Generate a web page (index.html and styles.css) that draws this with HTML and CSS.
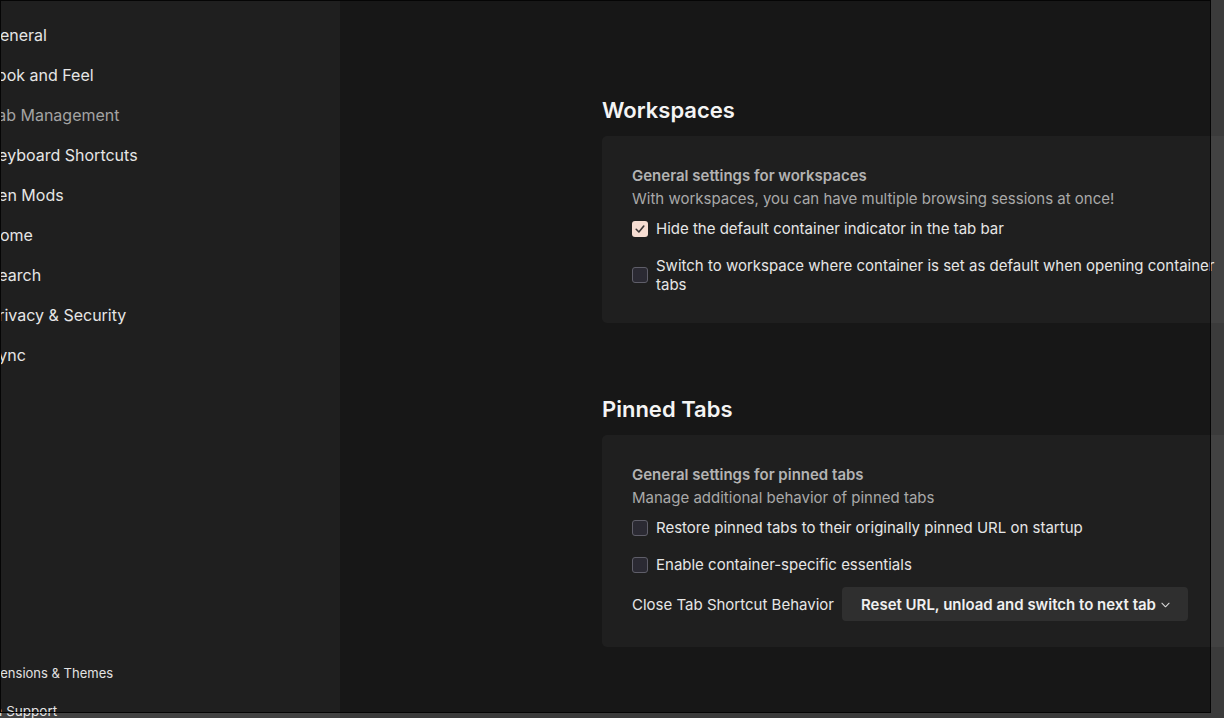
FILE: index.html
```html
<!DOCTYPE html>
<html lang="en">
<head>
<meta charset="utf-8">
<title>Settings</title>
<link rel="stylesheet" href="styles.css">
</head>
<body>
<div class="app">
  <aside class="sidebar">
    <nav class="categories">
      <div class="cat">General</div>
      <div class="cat">Look and Feel</div>
      <div class="cat cat-selected">Tab Management</div>
      <div class="cat">Keyboard Shortcuts</div>
      <div class="cat">Zen Mods</div>
      <div class="cat">Home</div>
      <div class="cat">Search</div>
      <div class="cat">Privacy &amp; Security</div>
      <div class="cat">Sync</div>
    </nav>
    <div class="footer-links">
      <div class="foot ext">Extensions &amp; Themes</div>
      <div class="foot sup">Zen Support</div>
    </div>
  </aside>
  <main class="main">
    <div class="content">
      <section class="group">
        <h1 class="group-title">Workspaces</h1>
        <div class="card">
          <div class="card-head">General settings for workspaces</div>
          <div class="card-desc">With workspaces, you can have multiple browsing sessions at once!</div>
          <label class="check-row first">
            <span class="box checked"><svg viewBox="0 0 16 16" width="16" height="16"><path d="M4.2 8.3 L6.9 11 L11.8 5" fill="none" stroke="#3b3636" stroke-width="1.6" stroke-linecap="round" stroke-linejoin="round"/></svg></span>
            <span class="label">Hide the default container indicator in the tab bar</span>
          </label>
          <label class="check-row">
            <span class="box"></span>
            <span class="label">Switch to workspace where container is set as default when opening container tabs</span>
          </label>
        </div>
      </section>
      <section class="group group-2">
        <h1 class="group-title">Pinned Tabs</h1>
        <div class="card card-2">
          <div class="card-head">General settings for pinned tabs</div>
          <div class="card-desc">Manage additional behavior of pinned tabs</div>
          <label class="check-row first">
            <span class="box"></span>
            <span class="label">Restore pinned tabs to their originally pinned URL on startup</span>
          </label>
          <label class="check-row">
            <span class="box"></span>
            <span class="label">Enable container-specific essentials</span>
          </label>
          <div class="select-row">
            <span class="select-label">Close Tab Shortcut Behavior</span>
            <button class="select">Reset URL, unload and switch to next tab<svg class="chev" viewBox="0 0 10 6" width="9" height="6"><path d="M1 1 L5 5 L9 1" fill="none" stroke="#d8d8d8" stroke-width="1.2" stroke-linecap="round" stroke-linejoin="round"/></svg></button>
          </div>
        </div>
      </section>
    </div>
  </main>
</div>
<div class="frame"></div>
</body>
</html>
```

FILE: styles.css
```css
* { box-sizing: border-box; }
html, body {
  margin: 0;
  padding: 0;
  width: 1224px;
  height: 718px;
  overflow: hidden;
  background: #171717;
  font-family: Inter, "Noto Sans", sans-serif;
  color: #e8e8e8;
}
.app {
  display: flex;
  width: 1224px;
  height: 718px;
}
.sidebar {
  width: 340px;
  flex: none;
  background: #1f1f1f;
  display: flex;
  flex-direction: column;
  overflow: hidden;
}
.categories {
  padding-top: 15px;
  display: flex;
  flex-direction: column;
}
.cat {
  height: 40px;
  line-height: 40px;
  font-size: 16px;
  margin-left: -12px;
  color: #e6e6e6;
  white-space: nowrap;
}
.cat-selected { color: #a3a3a3; }
.footer-links {
  margin-top: auto;
  display: flex;
  flex-direction: column;
  margin-bottom: -12px;
}
.foot {
  height: 38px;
  line-height: 38px;
  font-size: 13px;
  color: #e2e2e2;
  white-space: nowrap;
}
.ext { margin-left: -19px; }
.sup { margin-left: -22px; font-size: 13.5px; }
.main {
  flex: 1;
  overflow: hidden;
  background: #171717;
}
.content {
  margin-left: 262px;
  width: 680px;
  padding-top: 96px;
}
.group-title {
  margin: 0;
  font-size: 22px;
  line-height: 28px;
  font-weight: 600;
  color: #f4f4f4;
}
.group-2 { margin-top: 72px; }
.card {
  margin-top: 12px;
  width: 664px;
  background: #1f1f1f;
  border-radius: 5px;
  padding: 30px 30px 29px 30px;
}
.card-2 { margin-top: 12px; padding-bottom: 26px; }
.card-head {
  font-size: 15px;
  line-height: 20px;
  font-weight: 600;
  color: #b3b3b3;
}
.card-desc {
  margin-top: 3px;
  font-size: 15px;
  line-height: 20px;
  color: #a9a9a9;
}
.check-row {
  display: flex;
  align-items: center;
  gap: 8px;
  margin-top: 18px;
  font-size: 15px;
  line-height: 19px;
  color: #e6e6e6;
}
.check-row.first { margin-top: 10px; }
.box {
  flex: none;
  width: 16px;
  height: 16px;
  border-radius: 3px;
  border: 1px solid #5f5e69;
  background: #2b2a33;
  display: flex;
  align-items: center;
  justify-content: center;
}
.box.checked {
  border: none;
  background: #f6ddd2;
}
.box svg { display: block; }
.label { display: block; }
.select-row {
  display: flex;
  align-items: center;
  gap: 8px;
  margin-top: 13px;
}
.select-label {
  font-size: 15px;
  color: #e6e6e6;
}
.select {
  height: 34px;
  border: none;
  border-radius: 4px;
  background: #2f2f2f;
  color: #f0f0f0;
  font-family: Inter, "Noto Sans", sans-serif;
  font-size: 15px;
  font-weight: 600;
  padding: 0 18px 0 19px;
  display: flex;
  align-items: center;
  gap: 5px;
}
.chev { display: block; margin-top: 2px; }
.frame {
  position: fixed;
  left: 0;
  top: 0;
  width: 1211px;
  height: 713px;
  border: 1px solid #050505;
  box-shadow: 0 0 0 600px rgba(255, 255, 255, 0.155);
  pointer-events: none;
}
```
